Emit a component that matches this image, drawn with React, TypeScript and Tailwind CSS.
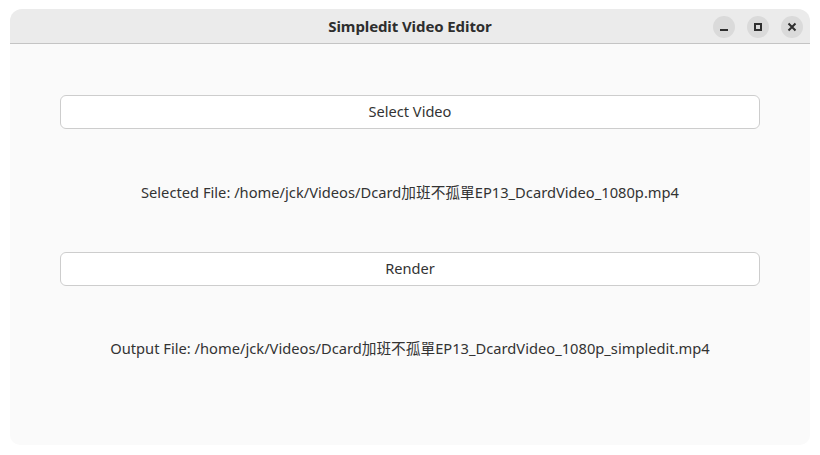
import React from "react";

const font = { fontFamily: '"Noto Sans", "Noto Sans CJK TC", sans-serif' };

export default function App() {
  return (
    <div className="w-[820px] h-[455px] bg-white pt-[9px] px-[10px]" style={font}>
      <div className="w-[800px] h-[436px] rounded-t-[12px] rounded-b-[10px] bg-[#fafafa] overflow-hidden flex flex-col">
        <div className="relative h-[35px] bg-[#ebebeb] border-b border-[#c4c4c4] flex items-center justify-center shrink-0">
          <span className="text-[15px] font-bold text-[#2e2e2e] tracking-[-0.1px] mt-[1px]">Simpledit Video Editor</span>
          <div className="absolute right-[7px] top-[7px] flex gap-[12px]">
            <div className="w-[22px] h-[22px] rounded-full bg-[#dadada] flex items-center justify-center">
              <div className="w-[8px] h-[2px] bg-[#2e2e2e] mt-[5px]" />
            </div>
            <div className="w-[22px] h-[22px] rounded-full bg-[#dadada] flex items-center justify-center">
              <div className="w-[8px] h-[8px] border-[2px] border-[#2e2e2e]" />
            </div>
            <div className="w-[22px] h-[22px] rounded-full bg-[#dadada] flex items-center justify-center">
              <svg width="10" height="10" viewBox="0 0 10 10">
                <path d="M1.5 1.5 L8.5 8.5 M8.5 1.5 L1.5 8.5" stroke="#2e2e2e" strokeWidth="2" />
              </svg>
            </div>
          </div>
        </div>
        <div className="flex flex-col px-[50px] text-[14.7px] text-[#333333]">
          <button className="mt-[51px] h-[34px] w-full rounded-[6px] border border-[#cdcdcd] bg-white text-[14.6px] text-[#333333]">
            Select Video
          </button>
          <div className="mt-[53px] h-[20px] flex items-center justify-center whitespace-nowrap">
            Selected File: /home/jck/Videos/Dcard加班不孤單EP13_DcardVideo_1080p.mp4
          </div>
          <button className="mt-[50px] h-[34px] w-full rounded-[6px] border border-[#cdcdcd] bg-white text-[14.6px] text-[#333333]">
            Render
          </button>
          <div className="mt-[52px] h-[20px] flex items-center justify-center whitespace-nowrap">
            Output File: /home/jck/Videos/Dcard加班不孤單EP13_DcardVideo_1080p_simpledit.mp4
          </div>
        </div>
      </div>
    </div>
  );
}
